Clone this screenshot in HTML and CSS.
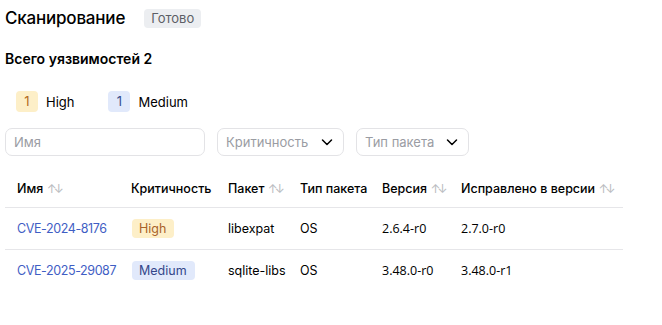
FILE: index.html
```html
<!DOCTYPE html>
<html>
  <head>
    <link rel="stylesheet" href="styles.css">
  </head>
  <body>
    <div class="page">
      <header class="head">
        <h1 class="title">Сканирование</h1>
        <span class="status">Готово</span>
      </header>

      <h2 class="total">Всего уязвимостей 2</h2>

      <div class="legend">
        <div class="legend-item"><span class="count high">1</span>High</div>
        <div class="legend-item"><span class="count medium">1</span>Medium</div>
      </div>

      <div class="filters">
        <div class="field name">Имя</div>
        <div class="field select sev">Критичность
          <svg width="14" height="14" viewBox="0 0 14 14"><path d="M2.5 5l4.5 4.5L11.5 5" fill="none" stroke="#000" stroke-width="1.5" stroke-linecap="round" stroke-linejoin="round"/></svg>
        </div>
        <div class="field select type">Тип пакета
          <svg width="14" height="14" viewBox="0 0 14 14"><path d="M2.5 5l4.5 4.5L11.5 5" fill="none" stroke="#000" stroke-width="1.5" stroke-linecap="round" stroke-linejoin="round"/></svg>
        </div>
      </div>

      <table class="vulns">
        <colgroup>
          <col class="c-name"><col class="c-sev"><col class="c-pkg">
          <col class="c-type"><col class="c-ver"><col class="c-fix">
        </colgroup>
        <thead>
          <tr>
            <th>Имя <span class="sort">↑↓</span></th>
            <th>Критичность</th>
            <th>Пакет <span class="sort">↑↓</span></th>
            <th>Тип пакета</th>
            <th>Версия <span class="sort">↑↓</span></th>
            <th>Исправлено в версии <span class="sort">↑↓</span></th>
          </tr>
        </thead>
        <tbody>
          <tr>
            <td><a class="cve">CVE-2024-8176</a></td>
            <td><span class="sev-tag high">High</span></td>
            <td>libexpat</td>
            <td>OS</td>
            <td class="ver">2.6.4-r0</td>
            <td class="ver">2.7.0-r0</td>
          </tr>
          <tr>
            <td><a class="cve">CVE-2025-29087</a></td>
            <td><span class="sev-tag medium">Medium</span></td>
            <td>sqlite-libs</td>
            <td>OS</td>
            <td class="ver">3.48.0-r0</td>
            <td class="ver">3.48.0-r1</td>
          </tr>
        </tbody>
      </table>
    </div>
  </body>
</html>
```

FILE: styles.css
```css
* { margin: 0; padding: 0; box-sizing: border-box; }

body {
  background: #fff;
  color: #000;
  font-family: "Inter", "Noto Sans", sans-serif;
  font-size: 13px;
}

.page { padding: 6px 5px; width: 628px; }

/* header */
.head { display: flex; align-items: center; gap: 19px; height: 24px; }
.title { font-size: 17px; font-weight: 500; letter-spacing: -0.2px; }
.status {
  background: #eceef1;
  color: #5c5f66;
  font-size: 13px;
  padding: 0 7px;
  height: 19px;
  line-height: 19px;
  border-radius: 4px;
}

.total { font-size: 14px; font-weight: 600; margin-top: 19px; line-height: 20px; }

/* legend */
.legend { display: flex; gap: 34px; margin: 22px 0 0 11px; }
.legend-item { display: flex; align-items: center; gap: 8px; height: 21px; font-size: 13px; }
.count {
  width: 22px; height: 21px;
  border-radius: 4px;
  text-align: center; line-height: 21px;
}
.count.high { background: #fdefc8; color: #b46b22; }
.count.medium { background: #e1e9fb; color: #3a4f8f; }

/* filters */
.filters { display: flex; gap: 12px; margin-top: 16px; }
.field {
  height: 28px;
  border: 1px solid #e3e3e6;
  border-radius: 7px;
  color: #9a9ca3;
  display: flex; align-items: center;
  padding: 0 8px;
}
.field.name { width: 200px; }
.select { justify-content: space-between; padding-right: 9px; }
.field.sev { width: 127px; }
.field.type { width: 113px; }

/* table */
.vulns { border-collapse: collapse; table-layout: fixed; width: 618px; margin-top: 12px; font-size: 12.5px; }
.c-name { width: 114px; }
.c-sev { width: 97px; }
.c-pkg { width: 72px; }
.c-type { width: 82px; }
.c-ver { width: 79px; }
.c-fix { width: 174px; }
.vulns th, .vulns td { text-align: left; padding: 0 12px; white-space: nowrap; }
.vulns th { font-weight: 500; height: 39px; border-bottom: 1px solid #e6e6e9; padding-top: 2px; }
.vulns td { height: 42px; }
.vulns tbody tr:first-child td { border-bottom: 1px solid #e6e6e9; }
.sort { color: #b9bbc0; font-size: 12px; letter-spacing: -3px; font-weight: 400; }
.cve { color: #3f5ec4; letter-spacing: -0.4px; }
.ver { font-family: "Open Sans", sans-serif; }
.sev-tag { display: inline-block; height: 19px; line-height: 19px; padding: 0 8px 0 7px; border-radius: 4px; margin-left: 1px; }
.sev-tag.high { background: #fdefc8; color: #a8622a; }
.sev-tag.medium { background: #e1e9fb; color: #34478a; }
```
